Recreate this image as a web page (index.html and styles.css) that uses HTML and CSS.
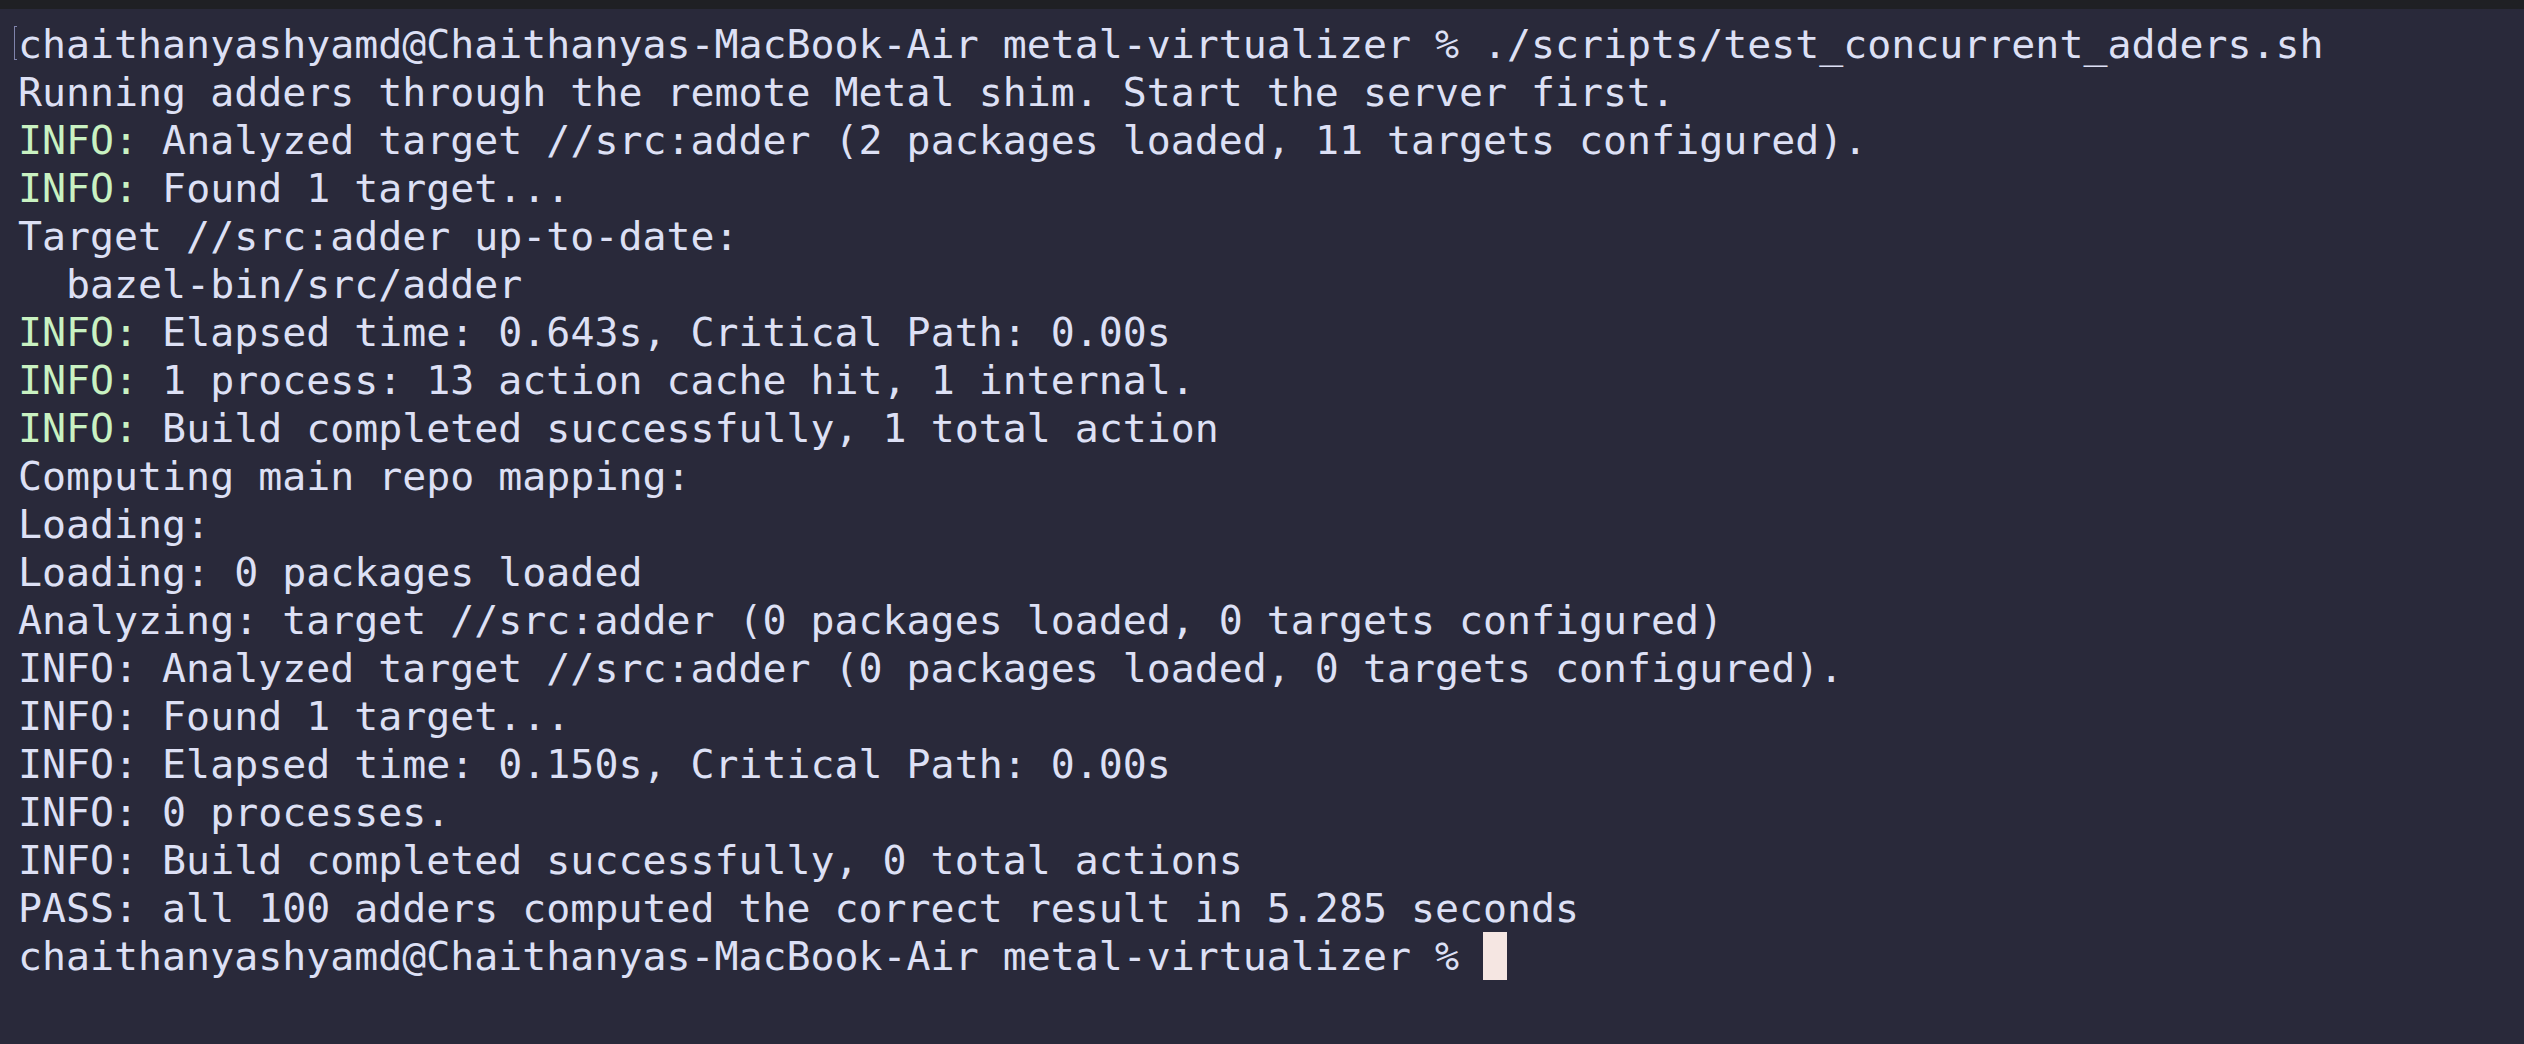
FILE: index.html
```html
<!DOCTYPE html>
<html>
<head>
<meta charset="utf-8">
<link rel="stylesheet" href="styles.css">
</head>
<body>
<div class="titlebar"></div>
<div class="term">
<div class="line first">chaithanyashyamd@Chaithanyas-MacBook-Air metal-virtualizer % ./scripts/test_concurrent_adders.sh</div>
<div class="line">Running adders through the remote Metal shim. Start the server first.</div>
<div class="line"><span class="info">INFO:</span> Analyzed target //src:adder (2 packages loaded, 11 targets configured).</div>
<div class="line"><span class="info">INFO:</span> Found 1 target...</div>
<div class="line">Target //src:adder up-to-date:</div>
<div class="line">  bazel-bin/src/adder</div>
<div class="line"><span class="info">INFO:</span> Elapsed time: 0.643s, Critical Path: 0.00s</div>
<div class="line"><span class="info">INFO:</span> 1 process: 13 action cache hit, 1 internal.</div>
<div class="line"><span class="info">INFO:</span> Build completed successfully, 1 total action</div>
<div class="line">Computing main repo mapping:</div>
<div class="line">Loading:</div>
<div class="line">Loading: 0 packages loaded</div>
<div class="line">Analyzing: target //src:adder (0 packages loaded, 0 targets configured)</div>
<div class="line">INFO: Analyzed target //src:adder (0 packages loaded, 0 targets configured).</div>
<div class="line">INFO: Found 1 target...</div>
<div class="line">INFO: Elapsed time: 0.150s, Critical Path: 0.00s</div>
<div class="line">INFO: 0 processes.</div>
<div class="line">INFO: Build completed successfully, 0 total actions</div>
<div class="line">PASS: all 100 adders computed the correct result in 5.285 seconds</div>
<div class="line">chaithanyashyamd@Chaithanyas-MacBook-Air metal-virtualizer % <span class="cursor"> </span></div>
</div>
</body>
</html>
```
FILE: styles.css
```css
html, body {
  margin: 0;
  padding: 0;
  background: #29293a;
  height: 100%;
  overflow: hidden;
}
.titlebar {
  height: 9px;
  background: #1f2024;
}
.term {
  padding: 11px 0 0 18px;
  font-family: "DejaVu Sans Mono", "Liberation Mono", monospace;
  font-size: 39.9px;
  line-height: 48px;
  color: #dde0f5;
}
.line {
  white-space: pre;
  height: 48px;
}
.first {
  position: relative;
}
.first::before {
  content: "";
  position: absolute;
  left: -4px;
  top: 6px;
  width: 2px;
  height: 32px;
  border: 1px solid #7f83ab;
  border-right: none;
}
.info {
  color: #c9f2c2;
}
.cursor {
  display: inline-block;
  width: 24px;
  height: 48px;
  vertical-align: top;
  background: #f5e6e2;
}
```
